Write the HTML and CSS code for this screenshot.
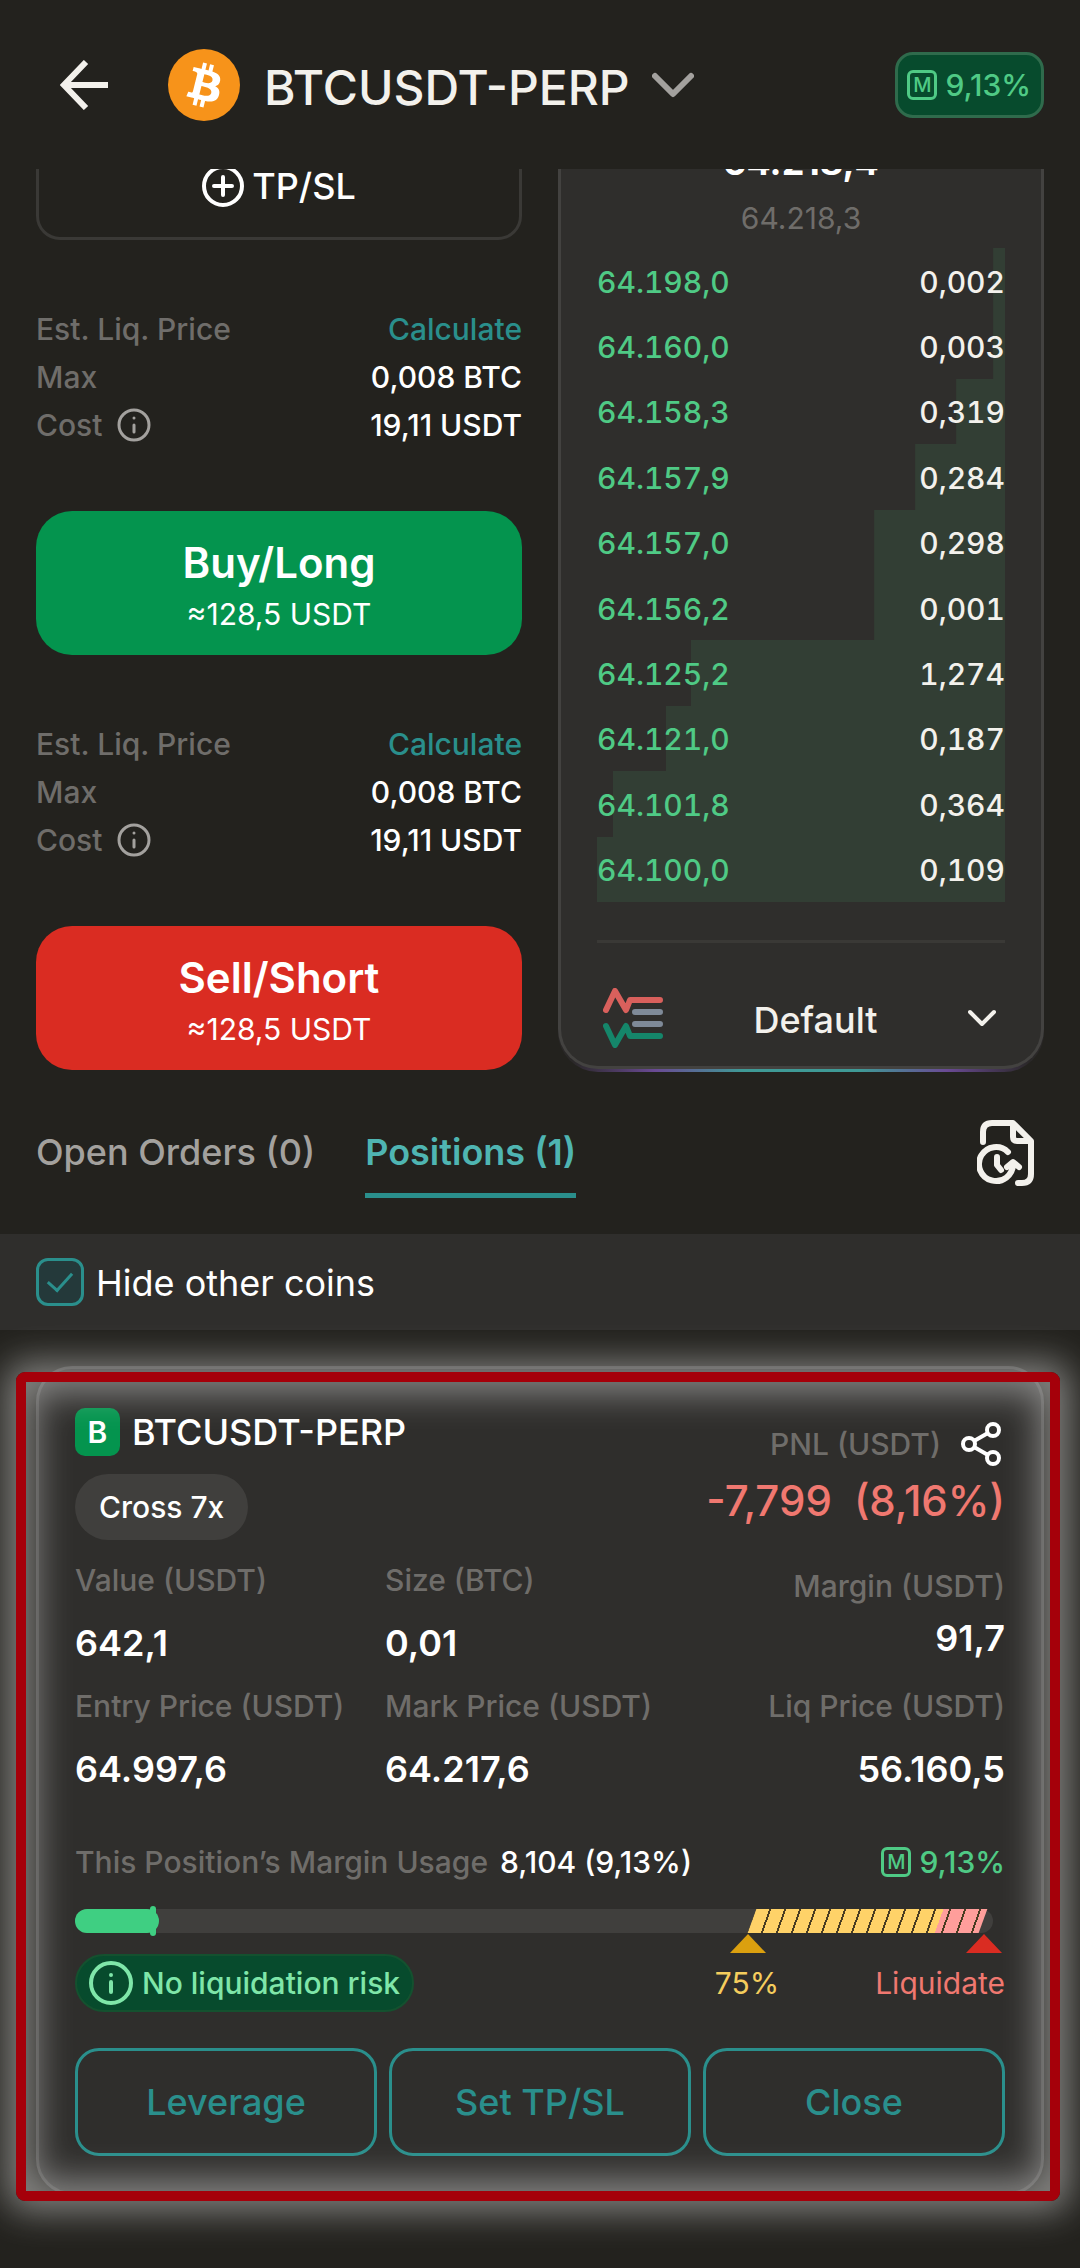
FILE: index.html
```html
<!DOCTYPE html>
<html lang="en">
<head>
    <meta charset="UTF-8">
    <meta name="viewport" content="width=device-width, initial-scale=1.0">
    <title>BTCUSDT-PERP</title>
    <link rel="stylesheet" href="styles.css">
</head>
<body>
    <header class="topbar">
        <button class="icon-btn back" aria-label="Back">
            <svg width="48" height="50" viewBox="0 0 48 50" fill="none" stroke="#f3f1ec" stroke-width="6"><path d="M26 2 4 25l22 23M4 25h44"/></svg>
        </button>
        <svg class="coin" width="72" height="72" viewBox="0 0 32 32">
            <circle cx="16" cy="16" r="16" fill="#f7931a"/>
            <path fill="#fff" d="M23.189 14.02c.314-2.096-1.283-3.223-3.465-3.975l.708-2.84-1.728-.43-.69 2.765c-.454-.114-.92-.22-1.385-.326l.695-2.783L15.596 6l-.708 2.839c-.376-.086-.746-.17-1.104-.26l.002-.009-2.384-.595-.46 1.846s1.283.294 1.256.312c.7.175.826.638.805 1.006l-.806 3.235c.048.012.11.03.18.057l-.183-.045-1.13 4.532c-.086.212-.303.531-.793.41.018.025-1.256-.313-1.256-.313l-.858 1.978 2.25.561c.418.105.828.215 1.231.318l-.715 2.872 1.727.43.708-2.84c.472.127.93.245 1.378.357l-.706 2.828 1.728.43.715-2.866c2.948.558 5.164.333 6.097-2.333.752-2.146-.037-3.385-1.588-4.192 1.13-.26 1.98-1.003 2.207-2.538zm-3.95 5.538c-.533 2.147-4.148.986-5.32.695l.95-3.805c1.172.293 4.929.872 4.37 3.11zm.535-5.569c-.487 1.953-3.495.96-4.47.717l.86-3.45c.975.243 4.118.696 3.61 2.733z"/>
        </svg>
        <button class="pair">
            <span class="pair-name">BTCUSDT-PERP</span>
            <svg width="42" height="26" viewBox="0 0 42 26" fill="none" stroke="#a3a19e" stroke-width="6" stroke-linecap="round" stroke-linejoin="round"><path d="m3 4 18 18L39 4"/></svg>
        </button>
        <div class="margin-badge"><span class="m-icon">M</span>9,13%</div>
    </header>

    <main>
        <section class="trade">
            <div class="order-form">
                <button class="tpsl">
                    <svg width="42" height="42" viewBox="0 0 42 42" fill="none" stroke="#fff" stroke-width="4" stroke-linecap="round"><circle cx="21" cy="21" r="19"/><path d="M21 12v18M12 21h18"/></svg>
                    TP/SL
                </button>

                <dl class="order-info">
                    <div><dt>Est. Liq. Price</dt><dd><a href="#">Calculate</a></dd></div>
                    <div><dt>Max</dt><dd>0,008 BTC</dd></div>
                    <div>
                        <dt>Cost <svg width="34" height="34" viewBox="0 0 34 34" fill="none" stroke="#a3a19e" stroke-width="3" stroke-linecap="round"><circle cx="17" cy="17" r="15"/><path d="M17 17v7M17 10v0"/></svg></dt>
                        <dd>19,11 USDT</dd>
                    </div>
                </dl>
                <button class="side-btn buy">Buy/Long <small>≈128,5 USDT</small></button>

                <dl class="order-info">
                    <div><dt>Est. Liq. Price</dt><dd><a href="#">Calculate</a></dd></div>
                    <div><dt>Max</dt><dd>0,008 BTC</dd></div>
                    <div>
                        <dt>Cost <svg width="34" height="34" viewBox="0 0 34 34" fill="none" stroke="#a3a19e" stroke-width="3" stroke-linecap="round"><circle cx="17" cy="17" r="15"/><path d="M17 17v7M17 10v0"/></svg></dt>
                        <dd>19,11 USDT</dd>
                    </div>
                </dl>
                <button class="side-btn sell">Sell/Short <small>≈128,5 USDT</small></button>
            </div>

            <div class="book-glow">
                <div class="order-book">
                    <div class="last-price">64.218,4</div>
                    <div class="mark-price">64.218,3</div>
                    <table class="bids">
                        <tr style="--depth: 3%"><td>64.198,0</td><td>0,002</td></tr>
                        <tr style="--depth: 3%"><td>64.160,0</td><td>0,003</td></tr>
                        <tr style="--depth: 12%"><td>64.158,3</td><td>0,319</td></tr>
                        <tr style="--depth: 22%"><td>64.157,9</td><td>0,284</td></tr>
                        <tr style="--depth: 32%"><td>64.157,0</td><td>0,298</td></tr>
                        <tr style="--depth: 32%"><td>64.156,2</td><td>0,001</td></tr>
                        <tr style="--depth: 77%"><td>64.125,2</td><td>1,274</td></tr>
                        <tr style="--depth: 83%"><td>64.121,0</td><td>0,187</td></tr>
                        <tr style="--depth: 96%"><td>64.101,8</td><td>0,364</td></tr>
                        <tr style="--depth: 100%"><td>64.100,0</td><td>0,109</td></tr>
                    </table>
                    <div class="book-footer">
                        <svg width="60" height="60" viewBox="0 0 60 60" fill="none" stroke-width="6" stroke-linecap="round" stroke-linejoin="round">
                            <path stroke="#d9605c" d="M3 22 12 3l11 19 4-10h30"/>
                            <path stroke="#7f8a98" d="M32 24h25M32 36h25"/>
                            <path stroke="#15866a" d="m3 38 9 19 11-19 4 10h30"/>
                        </svg>
                        <select class="book-mode" aria-label="Order book view">
                            <option>Default</option>
                        </select>
                        <svg class="caret" width="28" height="18" viewBox="0 0 28 18" fill="none" stroke="#f3f1ec" stroke-width="4" stroke-linecap="round" stroke-linejoin="round"><path d="m2 3 12 12L26 3"/></svg>
                    </div>
                </div>
            </div>
        </section>

        <nav class="tabs">
            <a class="tab" href="#">Open Orders (0)</a>
            <a class="tab active" href="#">Positions (1)</a>
            <button class="icon-btn history" aria-label="Order history">
                <svg width="58" height="66" viewBox="0 0 58 66" fill="none" stroke="#f3f1ec" stroke-width="6" stroke-linecap="round" stroke-linejoin="round">
                    <path d="M6 22V12q0-9 9-9h21l18 18v33q0 9-9 9h-4M36 4v13q0 4 4 4h13"/>
                    <path d="M31 32a17 17 0 1 0 5 12M30 47l6-5 6 5"/>
                    <path d="M20 37v8l4 5"/>
                </svg>
            </button>
        </nav>

        <div class="filter-bar">
            <input type="checkbox" id="hideOther" checked>
            <label for="hideOther">Hide other coins</label>
        </div>

        <section class="position-wrap">
            <article class="position">
                <div class="position-head">
                    <div>
                        <h2><span class="side-tag">B</span>BTCUSDT-PERP</h2>
                        <span class="chip">Cross 7x</span>
                    </div>
                    <div class="pnl">
                        <div class="pnl-label">
                            PNL (USDT)
                            <button class="icon-btn" aria-label="Share">
                                <svg width="40" height="44" viewBox="0 0 40 44" fill="none" stroke="#fff" stroke-width="4"><circle cx="8" cy="22" r="6"/><circle cx="32" cy="8" r="6"/><circle cx="32" cy="36" r="6"/><path d="m13 19 14-8M13 25l14 8"/></svg>
                            </button>
                        </div>
                        <div class="pnl-value"><span>-7,799</span><span>(8,16%)</span></div>
                    </div>
                </div>

                <dl class="stats">
                    <div><dt>Value (USDT)</dt><dd>642,1</dd></div>
                    <div><dt>Size (BTC)</dt><dd>0,01</dd></div>
                    <div class="right tight"><dt>Margin (USDT)</dt><dd>91,7</dd></div>
                    <div><dt>Entry Price (USDT)</dt><dd>64.997,6</dd></div>
                    <div><dt>Mark Price (USDT)</dt><dd>64.217,6</dd></div>
                    <div class="right"><dt>Liq Price (USDT)</dt><dd>56.160,5</dd></div>
                </dl>

                <div class="usage-label">
                    <span>This Position’s Margin Usage</span>
                    <strong>8,104 (9,13%)</strong>
                    <span class="usage-rate"><span class="m-icon">M</span>9,13%</span>
                </div>
                <div class="usage-bar">
                    <div class="usage-fill" style="width: 9.13%"></div>
                    <div class="usage-zone"></div>
                    <i class="marker warn"></i>
                    <i class="marker danger"></i>
                </div>
                <div class="usage-legend">
                    <span class="risk">
                        <svg width="44" height="44" viewBox="0 0 44 44" fill="none" stroke="#7fe6a9" stroke-width="4" stroke-linecap="round"><circle cx="22" cy="22" r="20"/><path d="M22 21v10M22 14v0"/></svg>
                        No liquidation risk
                    </span>
                    <span class="warn-text">75%</span>
                    <span class="danger-text">Liquidate</span>
                </div>

                <div class="actions">
                    <button>Leverage</button>
                    <button>Set TP/SL</button>
                    <button>Close</button>
                </div>
            </article>
            <div class="highlight"></div>
        </section>
    </main>
</body>
</html>
```

FILE: styles.css
```css
* {
    box-sizing: border-box;
}

body {
    margin: 0;
    min-height: 100vh;
    background: #23221e;
    color: #fff;
    font-family: Inter, "Open Sans", sans-serif;
    font-size: 30px;
    font-weight: 500;
    line-height: 48px;
    overflow-x: hidden;
}

button,
select {
    font: inherit;
    color: inherit;
    background: none;
    border: none;
    padding: 0;
}

svg {
    display: block;
    flex: none;
}

a {
    color: #2a8f8c;
    text-decoration: none;
}

dl,
dd,
h2 {
    margin: 0;
}

/* Header */
.topbar {
    position: relative;
    z-index: 2;
    display: flex;
    align-items: center;
    height: 169px;
    padding: 0 36px 0 60px;
    background: #23221e;
}

.coin {
    margin-left: 60px;
}

.pair {
    display: flex;
    align-items: center;
    gap: 22px;
    margin-left: 24px;
    color: #f3f1ec;
    font-size: 48px;
    line-height: 60px;
}

.pair-name {
    padding-top: 6px;
}

.margin-badge {
    display: flex;
    align-items: center;
    gap: 8px;
    margin-left: auto;
    padding: 6px 10px 6px 9px;
    border: 3px solid #2f6b4c;
    border-radius: 18px;
    background: #074b2d;
    color: #4fca85;
}

.m-icon {
    display: inline-flex;
    align-items: center;
    justify-content: center;
    width: 30px;
    height: 30px;
    border: 3px solid #4fca85;
    border-radius: 6px;
    font-size: 20px;
    line-height: 24px;
}

/* Order form and book, scrolled slightly under the header */
.trade {
    display: grid;
    grid-template-columns: 1fr 1fr;
    gap: 36px;
    margin-top: -37px;
    padding: 0 36px;
}

.order-form {
    display: flex;
    flex-direction: column;
}

.tpsl {
    display: flex;
    align-items: center;
    justify-content: center;
    gap: 8px;
    height: 108px;
    border: 3px solid #3a3936;
    border-radius: 24px;
    font-size: 36px;
}

.order-info {
    margin: 65px 0 62px;
}

.order-info div {
    display: flex;
    justify-content: space-between;
}

.order-info dt {
    display: flex;
    align-items: center;
    gap: 14px;
    color: #6f6d6a;
}

.side-btn {
    display: flex;
    flex-direction: column;
    align-items: center;
    justify-content: center;
    height: 144px;
    padding-top: 8px;
    border-radius: 36px;
    font-size: 42px;
    font-weight: 600;
    line-height: 54px;
}

.side-btn small {
    font-size: 30px;
    font-weight: 400;
    line-height: 48px;
}

.buy {
    background: #04944e;
}

.sell {
    background: #da2c22;
}

/* Coloured line that shows under the card's bottom edge */
.book-glow {
    padding-bottom: 3px;
    border-radius: 0 0 40px 40px;
    background: linear-gradient(90deg, #2a2828 3%, #6a4a94 20%, #3f9a96 38%, #3f9a96 62%, #6a4a94 80%, #2a2828 97%);
}

.order-book {
    padding: 6px 36px 0;
    border: 3px solid #434240;
    border-top: none;
    border-radius: 0 0 40px 40px;
    background: #2f2e2c;
}

.last-price {
    text-align: center;
    font-size: 36px;
    font-weight: 700;
}

.mark-price {
    padding-top: 2px;
    color: #6f6d6a;
    font-weight: 400;
    line-height: 60px;
    text-align: center;
}

.bids {
    width: 100%;
    height: 654px;
    border-spacing: 0;
    font-variant-numeric: tabular-nums;
}

.bids tr {
    background: linear-gradient(to left, #323e34 var(--depth), transparent var(--depth));
}

.bids td {
    padding: 2px 0 0;
    color: #4fca85;
}

.bids td + td {
    color: #f3f1ec;
    text-align: right;
}

.book-footer {
    display: flex;
    align-items: center;
    margin-top: 38px;
    padding: 27px 9px 0 6px;
    border-top: 3px solid #3a3936;
}

.book-mode {
    flex: 1;
    height: 96px;
    padding-top: 4px;
    appearance: none;
    color: #f3f1ec;
    font-size: 36px;
    text-align-last: center;
}

/* Tabs */
.tabs {
    display: flex;
    align-items: flex-start;
    gap: 50px;
    padding: 48px 45px 36px 36px;
}

.tab {
    padding: 8px 0 17px;
    border-bottom: 5px solid transparent;
    color: #a3a19e;
    font-size: 36px;
}

.tab.active {
    border-color: #2a8f8c;
    color: #4fb5b2;
    font-weight: 600;
}

.history {
    margin-left: auto;
}

.filter-bar {
    display: flex;
    align-items: center;
    gap: 12px;
    padding: 24px 36px;
    background: #2f2e2c;
    font-size: 36px;
    font-weight: 400;
}

.filter-bar label {
    padding-top: 3px;
    line-height: 45px;
}

.filter-bar input {
    appearance: none;
    display: grid;
    place-items: center;
    width: 48px;
    height: 48px;
    margin: 0;
    border: 3px solid #2a8f8c;
    border-radius: 12px;
    background: #24393a;
}

.filter-bar input:checked::after {
    content: "";
    width: 11px;
    height: 21px;
    margin-bottom: 6px;
    border: solid #2a8f8c;
    border-width: 0 3px 3px 0;
    transform: rotate(42deg);
}

/* Position card */
.position-wrap {
    position: relative;
    padding: 36px 36px 72px;
}

.position {
    padding: 39px 36px 36px;
    border: 3px solid #434240;
    border-radius: 36px;
    background: #2f2e2c;
}

.highlight {
    position: absolute;
    top: 42px;
    right: 20px;
    bottom: 66px;
    left: 16px;
    border: 10px solid #a5000a;
    border-radius: 9px;
    box-shadow: 0 0 36px 10px rgba(255, 255, 255, 0.44), inset 0 0 36px 10px rgba(255, 255, 255, 0.44);
    pointer-events: none;
}

.position-head {
    display: flex;
    justify-content: space-between;
}

.position h2 {
    display: flex;
    align-items: center;
    gap: 12px;
    margin-bottom: 18px;
    font-size: 36px;
    font-weight: 500;
}

.side-tag {
    width: 45px;
    border-radius: 10px;
    background: #04944e;
    font-size: 30px;
    font-weight: 600;
    text-align: center;
}

.chip {
    display: inline-block;
    padding: 9px 24px;
    border-radius: 33px;
    background: #403f3d;
}

.pnl {
    padding-top: 12px;
}

.pnl-label {
    display: flex;
    align-items: center;
    justify-content: flex-end;
    gap: 20px;
    padding-right: 4px;
    height: 48px;
    color: #6f6d6a;
}

.pnl-value {
    display: flex;
    justify-content: flex-end;
    gap: 22px;
    color: #f07870;
    font-size: 42px;
    line-height: 66px;
}

.stats {
    display: grid;
    grid-template-columns: repeat(3, 1fr);
    margin: 9px 0 37px;
    line-height: 63px;
}

.stats dt {
    color: #6f6d6a;
    white-space: nowrap;
}

.stats dd {
    font-size: 36px;
    font-weight: 600;
}

.stats .right {
    text-align: right;
}

.stats .tight {
    align-self: center;
    line-height: 52px;
}

.usage-label {
    display: flex;
    gap: 12px;
    color: #6f6d6a;
}

.usage-label strong {
    color: #fff;
    font-weight: 500;
}

.usage-rate {
    display: flex;
    align-items: center;
    gap: 8px;
    margin-left: auto;
    color: #4fca85;
}

.usage-bar {
    position: relative;
    height: 24px;
    margin: 23px 12px 21px 0;
    border-radius: 12px;
    background: #403f3d;
}

.usage-fill {
    position: relative;
    height: 24px;
    border-radius: 12px;
    background: #3fcf82;
}

.usage-fill::after {
    content: "";
    position: absolute;
    top: -3px;
    right: 3px;
    width: 6px;
    height: 30px;
    border-radius: 3px;
    background: #3fcf82;
}

.usage-zone {
    position: absolute;
    top: 0;
    right: 10px;
    width: 231px;
    height: 24px;
    background:
        repeating-linear-gradient(90deg, transparent 0 13px, #4a3d22 13px 15px),
        linear-gradient(90deg, #ffd268 81%, #ff9e9b 81%);
    transform: skewX(-20deg);
}

.marker {
    position: absolute;
    top: 25px;
    width: 36px;
    height: 19px;
    clip-path: polygon(50% 0, 100% 100%, 0 100%);
}

.marker.warn {
    right: 227px;
    background: #dba00f;
}

.marker.danger {
    right: -9px;
    background: #da2c22;
}

.usage-legend {
    display: flex;
    align-items: center;
    font-weight: 400;
}

.risk {
    display: flex;
    align-items: center;
    gap: 9px;
    margin-right: auto;
    padding: 3px 12px;
    border: 2px solid #14512f;
    border-radius: 29px;
    background: #074b2d;
    color: #7fe6a9;
    font-weight: 500;
}

.warn-text {
    margin-right: 96px;
    color: #f5cd5d;
}

.danger-text {
    color: #f07870;
}

.actions {
    display: grid;
    grid-template-columns: repeat(3, 1fr);
    gap: 12px;
    margin-top: 36px;
}

.actions button {
    height: 108px;
    border: 3px solid #2a8f8c;
    border-radius: 24px;
    color: #2a8f8c;
    font-size: 36px;
}
```
